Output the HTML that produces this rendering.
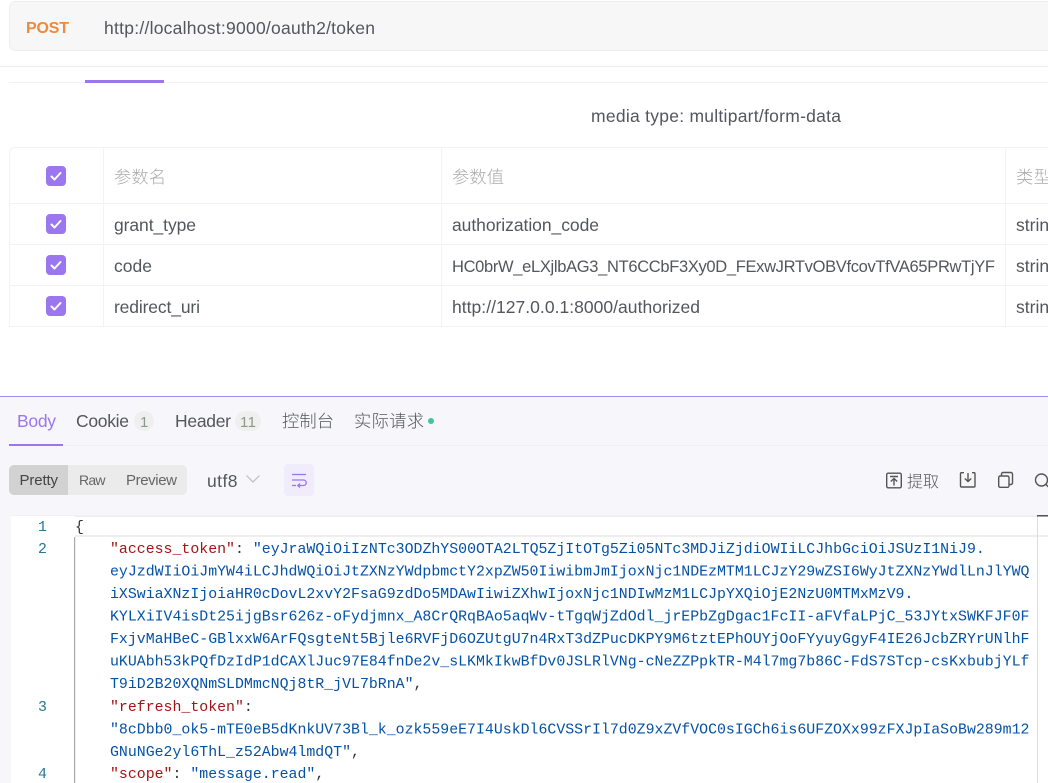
<!DOCTYPE html>
<html lang="zh"><head><meta charset="utf-8"><title>POST</title>
<style>
html,body{margin:0;padding:0;width:1048px;height:783px;overflow:hidden;background:#fff}
svg{display:block}
.u{font-family:"Liberation Sans","Noto Sans CJK SC",sans-serif;font-size:17.5px;fill:#53565c}
.c{font-family:"Noto Sans CJK SC","WenQuanYi Zen Hei",sans-serif;font-size:17.3px;font-weight:300}
.m{font-family:"Liberation Mono",monospace;font-size:14.88px;fill:#0451a5;white-space:pre}
.k{fill:#a31515}.p{fill:#333}
.n{font-family:"Liberation Mono",monospace;font-size:14.88px;fill:#237893}
</style></head><body>
<svg width="1048" height="783" viewBox="0 0 1048 783" xmlns="http://www.w3.org/2000/svg">
<rect x="9.5" y="1.5" width="1060" height="49" rx="6" fill="#f7f7f8" stroke="#ecedf2"/>
<text x="26" y="33" font-family="Liberation Sans" font-size="16" font-weight="700" fill="#f0893a" textLength="43">POST</text>
<text class="u" x="104" y="34" textLength="271">http://localhost:9000/oauth2/token</text>
<rect x="0" y="66" width="1048" height="1" fill="#ebebf3"/>
<rect x="9" y="82" width="1039" height="1" fill="#f2f2f5"/>
<rect x="85" y="80" width="79" height="3" fill="#9b76ee"/>
<text class="u" x="591" y="122" textLength="250">media type: multipart/form-data</text>

<path d="M1048 147.5H15a5.500 5.500 0 0 0-5.500 5.500V326.500H1048" fill="none" stroke="#f3f3f5"/>
<path d="M10 203.500H1048M10 244.500H1048M10 285.500H1048M103.500 148V326M441.500 148V326M1005.500 148V326" stroke="#f3f3f5" fill="none"/>
<g fill="#9b76ee"><rect x="46" y="166" width="20" height="20" rx="4"/><rect x="46" y="214" width="20" height="20" rx="4"/><rect x="46" y="255" width="20" height="20" rx="4"/><rect x="46" y="296" width="20" height="20" rx="4"/></g>
<g fill="none" stroke="#fff" stroke-width="2" stroke-linecap="round" stroke-linejoin="round"><path d="M51.500 176.500l3 3 6-6.500"/><path d="M51.500 224.500l3 3 6-6.500"/><path d="M51.500 265.500l3 3 6-6.500"/><path d="M51.500 306.500l3 3 6-6.500"/></g>
<text class="c" x="114" y="183" fill="#aaa" textLength="52">参数名</text>
<text class="c" x="452" y="183" fill="#aaa" textLength="52">参数值</text>
<text class="c" x="1016" y="183" fill="#aaa" textLength="35">类型</text>
<text class="u" x="114" y="231" textLength="82">grant_type</text>
<text class="u" x="114" y="272" textLength="38">code</text>
<text class="u" x="114" y="313" textLength="86">redirect_uri</text>
<text class="u" x="452" y="231" textLength="147">authorization_code</text>
<text class="u" x="452" y="272" textLength="543" style="font-size:16.500px">HC0brW_eLXjlbAG3_NT6CCbF3Xy0D_FExwJRTvOBVfcovTfVA65PRwTjYF</text>
<text class="u" x="452" y="313" textLength="248">http://127.0.0.1:8000/authorized</text>
<text class="u" x="1016" y="231">string</text>
<text class="u" x="1016" y="272">string</text>
<text class="u" x="1016" y="313">string</text>

<rect x="0" y="396" width="1048" height="387" fill="#f7f7fb"/>
<rect x="0" y="396" width="1048" height="1" fill="#a98cf0"/>
<rect x="9" y="445" width="1039" height="1" fill="#f0f0f4"/>
<rect x="9" y="444" width="54" height="2" fill="#9b76ee"/>
<text class="u" x="17" y="427" style="fill:#9b76ee" textLength="39">Body</text>
<text class="u" x="76" y="427" textLength="53">Cookie</text>
<rect x="134" y="411" width="20" height="20" rx="10" fill="#efefef"/>
<text x="140" y="427" font-family="Liberation Sans" font-size="15" fill="#8a9a88">1</text>
<text class="u" x="175" y="427" textLength="56">Header</text>
<rect x="235" y="411" width="26" height="20" rx="10" fill="#efefef"/>
<text x="240" y="427" font-family="Liberation Sans" font-size="15" fill="#8a9a88" textLength="16">11</text>
<text class="c" x="282" y="427" fill="#53565c" textLength="52">控制台</text>
<text class="c" x="354" y="427" fill="#53565c" textLength="70">实际请求</text>
<circle cx="431" cy="421" r="3" fill="#3fc79a"/>

<rect x="9" y="465" width="178" height="30" rx="5" fill="#ebebeb"/>
<path d="M14 465H68V495H14a5 5 0 0 1-5-5V470a5 5 0 0 1 5-5z" fill="#d2d2d2"/>
<text x="19.500" y="485" font-family="Liberation Sans" font-size="15" fill="#444" textLength="38.500">Pretty</text>
<text x="79" y="485" font-family="Liberation Sans" font-size="14" fill="#666" style="font-kerning:none" textLength="26.500">Raw</text>
<text x="126" y="485" font-family="Liberation Sans" font-size="15" fill="#666" textLength="51">Preview</text>
<text class="u" x="207" y="487" textLength="30.500">utf8</text>
<path d="M246.500 475.500l6.500 6.500 6.500-6.500" fill="none" stroke="#bdbdbd" stroke-width="1.200"/>
<rect x="284" y="464" width="30" height="32" rx="4" fill="#f0ecfb"/>
<g fill="none" stroke="#9b76ee" stroke-width="1.300"><path d="M292 474.500H306"/><path d="M292 480H303.500a2.500 2.500 0 0 1 0 5.500H298"/><path d="M300 483.500l-2.200 2 2.200 2"/><path d="M292 485.500H296"/></g>

<g fill="none" stroke="#555" stroke-width="1.400">
<rect x="886.700" y="473.200" width="14.600" height="14.600" rx="1.500"/>
<path d="M890 476.500H898M894 485.500V478.500M890.800 481.500l3.200-3 3.200 3"/>
<path d="M964 472.700H961.500a1 1 0 0 0-1 1V486a1 1 0 0 0 1 1H974a1 1 0 0 0 1-1V473.700a1 1 0 0 0-1-1H972"/>
<path d="M968 473V481.500M964.800 478.500l3.200 3 3.200-3"/>
<rect x="998.700" y="476" width="10.300" height="11.300" rx="1.500"/>
<path d="M1001.500 475.500V474a1.500 1.500 0 0 1 1.500-1.500H1011a1.500 1.500 0 0 1 1.500 1.500V483a1.500 1.500 0 0 1-1.500 1.500H1009.500"/>
<circle cx="1041.500" cy="480" r="6"/><path d="M1046 484.500L1050 488.500"/>
</g>
<text class="c" x="907" y="487" fill="#53565c" textLength="32" style="font-size:16px">提取</text>

<rect x="11" y="515" width="1037" height="268" fill="#fff"/>
<rect x="11" y="515" width="1037" height="1" fill="#f1f1f4"/>
<rect x="75" y="516" width="973" height="1" fill="#eeeeee"/>
<rect x="75" y="535" width="973" height="2" fill="#eeeeee"/>
<rect x="74" y="537" width="1.200" height="246" fill="#a8a8a8"/>
<rect x="1037" y="516" width="1" height="267" fill="#dddddd"/>
<rect x="1037" y="515" width="11" height="1.500" fill="#555"/>

<text class="n" x="38" y="531">1</text>
<text class="n" x="38" y="553">2</text>
<text class="n" x="38" y="711">3</text>
<text class="n" x="38" y="778">4</text>
<text class="m p" x="75" y="531">{</text>
<text class="m" x="110" y="553"><tspan class="k">"access_token"</tspan><tspan class="p">: </tspan>"eyJraWQiOiIzNTc3ODZhYS00OTA2LTQ5ZjItOTg5Zi05NTc3MDJiZjdiOWIiLCJhbGciOiJSUzI1NiJ9.</text>
<text class="m" x="110" y="575.500">eyJzdWIiOiJmYW4iLCJhdWQiOiJtZXNzYWdpbmctY2xpZW50IiwibmJmIjoxNjc1NDEzMTM1LCJzY29wZSI6WyJtZXNzYWdlLnJlYWQ</text>
<text class="m" x="110" y="598">iXSwiaXNzIjoiaHR0cDovL2xvY2FsaG9zdDo5MDAwIiwiZXhwIjoxNjc1NDIwMzM1LCJpYXQiOjE2NzU0MTMxMzV9.</text>
<text class="m" x="110" y="620.500">KYLXiIV4isDt25ijgBsr626z-oFydjmnx_A8CrQRqBAo5aqWv-tTgqWjZdOdl_jrEPbZgDgac1FcII-aFVfaLPjC_53JYtxSWKFJF0F</text>
<text class="m" x="110" y="643">FxjvMaHBeC-GBlxxW6ArFQsgteNt5Bjle6RVFjD6OZUtgU7n4RxT3dZPucDKPY9M6tztEPhOUYjOoFYyuyGgyF4IE26JcbZRYrUNlhF</text>
<text class="m" x="110" y="665.500">uKUAbh53kPQfDzIdP1dCAXlJuc97E84fnDe2v_sLKMkIkwBfDv0JSLRlVNg-cNeZZPpkTR-M4l7mg7b86C-FdS7STcp-csKxbubjYLf</text>
<text class="m" x="110" y="688">T9iD2B20XQNmSLDMmcNQj8tR_jVL7bRnA"<tspan class="p">,</tspan></text>
<text class="m" x="110" y="711"><tspan class="k">"refresh_token"</tspan><tspan class="p">:</tspan></text>
<text class="m" x="110" y="733.500">"8cDbb0_ok5-mTE0eB5dKnkUV73Bl_k_ozk559eE7I4UskDl6CVSSrIl7d0Z9xZVfVOC0sIGCh6is6UFZOXx99zFXJpIaSoBw289m12</text>
<text class="m" x="110" y="756">GNuNGe2yl6ThL_z52Abw4lmdQT"<tspan class="p">,</tspan></text>
<text class="m" x="110" y="778"><tspan class="k">"scope"</tspan><tspan class="p">: </tspan>"message.read"<tspan class="p">,</tspan></text>
</svg>
</body></html>
